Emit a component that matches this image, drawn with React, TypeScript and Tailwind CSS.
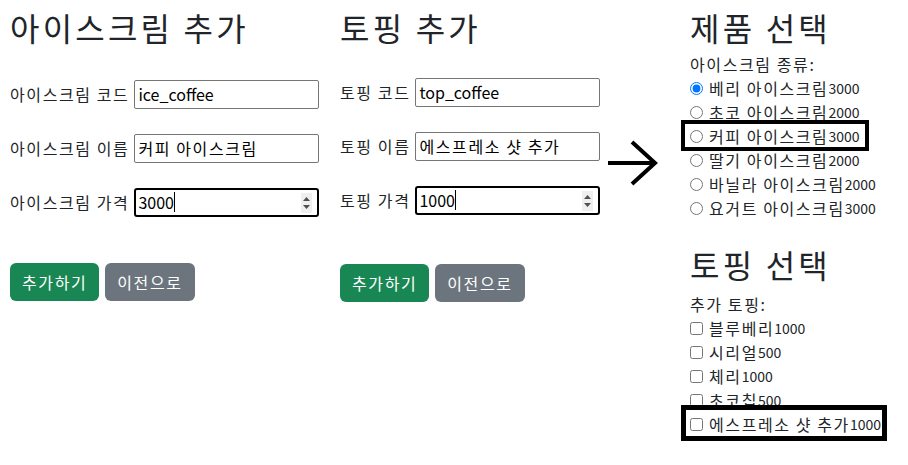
import React from "react";

const font = { fontFamily: '"Noto Sans CJK KR", "Noto Sans", sans-serif' };

const Spinner = () => (
  <div className="absolute right-[5px] top-[3px] flex h-[20px] w-[11px] flex-col items-center justify-center gap-[4px] bg-[#efefef]">
    <svg width="7" height="4" viewBox="0 0 7 4">
      <path d="M0 4 L3.5 0 L7 4 Z" fill="#505050" />
    </svg>
    <svg width="7" height="4" viewBox="0 0 7 4">
      <path d="M0 0 L3.5 4 L7 0 Z" fill="#505050" />
    </svg>
  </div>
);

const Field = ({
  label,
  value,
  focused,
}: {
  label: string;
  value: string;
  focused?: boolean;
}) => (
  <div className="flex h-[30px] items-center gap-[5px]">
    <label className="text-[16px] tracking-[0.1em] text-[#212529]">{label}</label>
    <div
      className={
        focused
          ? "relative flex h-[29px] w-[185px] items-center rounded-[3px] border-2 border-black pl-[2px]"
          : "relative flex h-[29px] w-[185px] items-center rounded-[2px] border border-[#767676] pl-[3px]"
      }
    >
      <span className={/\d/.test(value) || /_/.test(value) ? "text-[16px] text-black" : "text-[16px] tracking-[0.1em] text-black"}>
        {value}
      </span>
      {focused && <span className="h-[20px] w-px bg-black" />}
      {focused && <Spinner />}
    </div>
  </div>
);

const Buttons = () => (
  <div className="flex gap-[6px]">
    <button className="h-[38px] rounded-[6px] bg-[#198754] px-[12px] text-[16px] tracking-[0.1em] text-white">
      추가하기
    </button>
    <button className="h-[38px] rounded-[6px] bg-[#6c757d] px-[12px] text-[16px] tracking-[0.1em] text-white">
      이전으로
    </button>
  </div>
);

const Heading = ({ children }: { children: React.ReactNode }) => (
  <h2 className="h-[38px] text-[32px] leading-[38px] tracking-[0.1em] text-[#212529]">{children}</h2>
);

const AddForm = ({
  title,
  rows,
  shift,
}: {
  title: string;
  rows: { label: string; value: string; focused?: boolean }[];
  shift?: boolean;
}) => (
  <div className="flex flex-col">
    <Heading>{title}</Heading>
    <div className={shift ? "mt-[31px] flex flex-col gap-[24px]" : "mt-[33px] flex flex-col gap-[24px]"}>
      {rows.map((r) => (
        <Field key={r.label} {...r} />
      ))}
    </div>
    <div className={shift ? "mt-[49px]" : "mt-[46px]"}>
      <Buttons />
    </div>
  </div>
);

const iceCreams = [
  { name: "베리 아이스크림", price: 3000 },
  { name: "초코 아이스크림", price: 2000 },
  { name: "커피 아이스크림", price: 3000 },
  { name: "딸기 아이스크림", price: 2000 },
  { name: "바닐라 아이스크림", price: 2000 },
  { name: "요거트 아이스크림", price: 3000 },
];

const toppings = [
  { name: "블루베리", price: 1000 },
  { name: "시리얼", price: 500 },
  { name: "체리", price: 1000 },
  { name: "초코칩", price: 500 },
  { name: "에스프레소 샷 추가", price: 1000 },
];

export default function App() {
  return (
    <div style={font} className="flex h-[465px] w-[908px] bg-white pl-[10px] pt-[8px] text-[#212529]">
      <div className="w-[330px]">
        <AddForm
          title="아이스크림 추가"
          rows={[
            { label: "아이스크림 코드", value: "ice_coffee" },
            { label: "아이스크림 이름", value: "커피 아이스크림" },
            { label: "아이스크림 가격", value: "3000", focused: true },
          ]}
        />
      </div>
      <div className="w-[269px]">
        <AddForm
          shift
          title="토핑 추가"
          rows={[
            { label: "토핑 코드", value: "top_coffee" },
            { label: "토핑 이름", value: "에스프레소 샷 추가" },
            { label: "토핑 가격", value: "1000", focused: true },
          ]}
        />
      </div>
      <div className="ml-[-2px] mt-[132px] w-[52px]">
        <svg width="52" height="48" viewBox="0 0 52 48">
          <path d="M1 23 H48" stroke="black" strokeWidth="4" fill="none" />
          <path d="M25 2 L48 23 L25 44" stroke="black" strokeWidth="4" fill="none" strokeLinejoin="miter" />
        </svg>
      </div>
      <div className="ml-[31px] flex flex-col">
        <Heading>제품 선택</Heading>
        <div className="mt-[6px] text-[16px] leading-[24px] tracking-[0.1em]">아이스크림 종류:</div>
        {iceCreams.map((ic, i) => (
          <div key={ic.name} className="relative flex h-[24px] items-center">
            <input
              type="radio"
              name="ice"
              defaultChecked={i === 0}
              className="m-0 mr-[6px] h-[13px] w-[13px]"
            />
            <span className="text-[16px] tracking-[0.1em]">{ic.name}</span>
            <span className="text-[14px]">{ic.price}</span>
            {i === 2 && (
              <div className="absolute left-[-9px] top-[-4px] h-[31px] w-[188px] border-4 border-black" />
            )}
          </div>
        ))}
        <div className="mt-[25px]">
          <Heading>토핑 선택</Heading>
        </div>
        <div className="mt-[9px] text-[16px] leading-[24px] tracking-[0.1em]">추가 토핑:</div>
        {toppings.map((t, i) => (
          <div key={t.name} className="relative flex h-[24px] items-center">
            <input type="checkbox" className="m-0 mr-[6px] h-[13px] w-[13px]" />
            <span className="text-[16px] tracking-[0.1em]">{t.name}</span>
            <span className="text-[14px]">{t.price}</span>
            {i === 4 && (
              <div className="absolute left-[-9px] top-[-7px] h-[36px] w-[206px] border-[5px] border-black" />
            )}
          </div>
        ))}
      </div>
    </div>
  );
}
